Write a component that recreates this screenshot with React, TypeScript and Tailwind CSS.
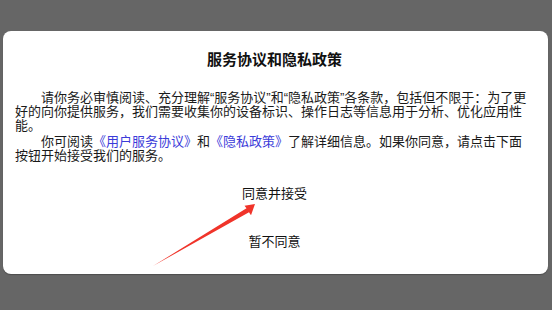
import React from "react";

export default function App() {
  const font = {
    fontFamily: '"Liberation Sans", "Noto Sans CJK SC", sans-serif',
  };
  return (
    <div
      className="relative w-[552px] h-[310px] bg-[#666666] overflow-hidden pt-[31px] pl-[3px]"
      style={font}
    >
      <div className="w-[545px] h-[243px] bg-white rounded-[8px] shadow-[0_1px_1px_rgba(0,0,0,0.25)] pt-[19px] pl-[12px] pr-[14px] flex flex-col">
        <div className="text-center text-[15px] leading-[20px] font-bold text-[#111]">
          服务协议和隐私政策
        </div>
        <p className="mt-[21px] text-[13px] leading-[14px] text-[#1a1a1a] indent-[26px]">
          请你务必审慎阅读、充分理解“服务协议”和“隐私政策”各条款，包括但不限于：为了更好的向你提供服务，我们需要收集你的设备标识、操作日志等信息用于分析、优化应用性能。
        </p>
        <p className="mt-[2px] text-[13px] leading-[14px] text-[#1a1a1a] indent-[26px]">
          你可阅读<span className="text-[#3b3bd9]">《用户服务协议》</span>和
          <span className="text-[#3b3bd9]">《隐私政策》</span>
          了解详细信息。如果你同意，请点击下面按钮开始接受我们的服务。
        </p>
        <div className="mt-[21px] text-center text-[13px] leading-[20px] text-[#111]">
          同意并接受
        </div>
        <div className="mt-[28px] text-center text-[13px] leading-[20px] text-[#111]">
          暂不同意
        </div>
      </div>
      <svg
        className="absolute left-0 top-0"
        width="552"
        height="310"
        viewBox="0 0 552 310"
      >
        <polygon
          points="153,266 246.5,208.3 244.5,205.8 255,204 251,215.3 249,212.3"
          fill="#f0342a"
        />
      </svg>
    </div>
  );
}
